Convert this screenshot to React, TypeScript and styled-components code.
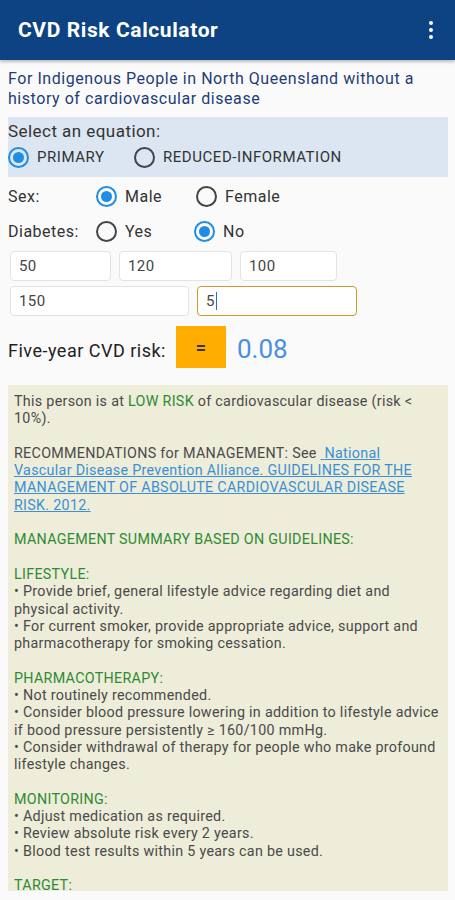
import React from "react";
import styled, { createGlobalStyle } from "styled-components";

const Global = createGlobalStyle`
  html, body { margin: 0; padding: 0; background: #fafafa; }
  body { font-family: Roboto, "Noto Sans", "Liberation Sans", sans-serif; }
  * { box-sizing: border-box; }
`;

const Page = styled.div`
  width: 455px;
  height: 900px;
  overflow: hidden;
  background: #fafafa;
`;

const AppBar = styled.header`
  height: 60px;
  background: #0d4383;
  display: flex;
  align-items: center;
  justify-content: space-between;
  padding: 0 18px 0 18px;
  box-shadow: 0 2px 3px rgba(0, 0, 0, 0.25);
  position: relative;
  z-index: 1;
`;

const Title = styled.h1`
  margin: 0;
  color: #fff;
  font-size: 21px;
  font-weight: 700;
  letter-spacing: 0.6px;
`;

const Kebab = styled.div`
  display: flex;
  flex-direction: column;
  gap: 3px;
  padding: 4px;
  span {
    width: 4px;
    height: 4px;
    border-radius: 50%;
    background: #fff;
  }
`;

const Content = styled.main`
  padding: 9px 7px 0 8px;
  display: flex;
  flex-direction: column;
`;

const Intro = styled.p`
  margin: 0;
  color: #1f3d78;
  font-size: 16px;
  line-height: 20px;
  letter-spacing: 0.55px;
`;

const EquationBox = styled.section`
  margin-top: 8px;
  background: #dbe6f2;
  padding: 3px 0 4px 0;
  height: 60px;
`;

const BoxLabel = styled.div`
  color: #333;
  font-size: 17px;
  line-height: 22px;
  letter-spacing: 0.45px;
`;

const RadioRow = styled.div<{ h: number }>`
  display: flex;
  align-items: center;
  height: ${(p) => p.h}px;
`;

const FieldLabel = styled.span<{ w: number }>`
  width: ${(p) => p.w}px;
  color: #333;
  font-size: 16px;
  letter-spacing: 0.5px;
`;

const RadioOption = styled.label<{ w?: number }>`
  display: flex;
  align-items: center;
  gap: 8px;
  width: ${(p) => (p.w ? `${p.w}px` : "auto")};
`;

const OptionText = styled.span<{ small?: boolean }>`
  font-size: ${(p) => (p.small ? 15 : 16)}px;
  letter-spacing: ${(p) => (p.small ? 0.55 : 0.5)}px;
  color: #333;
`;

const RadioCircle = styled.span<{ on?: boolean }>`
  width: 21px;
  height: 21px;
  border-radius: 50%;
  border: 2px solid ${(p) => (p.on ? "#1f8de3" : "#444")};
  display: flex;
  align-items: center;
  justify-content: center;
  flex-shrink: 0;
  &::after {
    content: "";
    width: 11px;
    height: 11px;
    border-radius: 50%;
    background: ${(p) => (p.on ? "#1f8de3" : "transparent")};
  }
`;

const InputRow = styled.div<{ mt: number }>`
  display: flex;
  gap: 8px;
  padding-left: 2px;
  margin-top: ${(p) => p.mt}px;
`;

const Field = styled.div<{ w: number; focused?: boolean }>`
  width: ${(p) => p.w}px;
  height: 30px;
  border: 1.5px solid ${(p) => (p.focused ? "#c99a2e" : "#e3e3e3")};
  border-radius: 4px;
  background: #fff;
  display: flex;
  align-items: center;
  padding-left: 8px;
  color: #444;
  font-size: 15px;
  letter-spacing: 0.4px;
`;

const Caret = styled.span`
  display: inline-block;
  width: 1.5px;
  height: 18px;
  background: #1f6fd0;
  margin-left: 1px;
`;

const RiskRow = styled.div`
  display: flex;
  align-items: center;
  margin-top: 10px;
  height: 42px;
`;

const RiskLabel = styled.span`
  font-size: 18px;
  letter-spacing: 0.5px;
  color: #222;
  width: 168px;
  padding-top: 6px;
`;

const EqualsButton = styled.button`
  width: 50px;
  height: 42px;
  border: none;
  background: #ffae00;
  color: #333;
  font-size: 18px;
  font-weight: 700;
  font-family: inherit;
  padding: 0;
`;

const RiskValue = styled.span`
  margin-left: 11px;
  color: #4a8ede;
  font-size: 26px;
  padding-top: 4px;
`;

const Results = styled.section`
  margin-top: 17px;
  background: #ededd9;
  padding: 8px 7px 0 6px;
  height: 506px;
  overflow: hidden;
  font-size: 14.3px;
  letter-spacing: 0.3px;
  line-height: 17.3px;
  color: #4a4a4a;
`;

const Para = styled.p`
  margin: 0 0 17.3px 0;
`;

const Green = styled.span`
  color: #2f8a33;
`;

const Heading = styled.div`
  color: #2f8a33;
`;

const Link = styled.a`
  color: #3b8fd6;
  text-decoration: underline;
`;

export default function App() {
  return (
    <Page>
      <Global />
      <AppBar>
        <Title>CVD Risk Calculator</Title>
        <Kebab>
          <span />
          <span />
          <span />
        </Kebab>
      </AppBar>
      <Content>
        <Intro>
          For Indigenous People in North Queensland without a history of cardiovascular disease
        </Intro>
        <EquationBox>
          <BoxLabel>Select an equation:</BoxLabel>
          <RadioRow h={30}>
            <RadioOption w={126}>
              <RadioCircle on />
              <OptionText small>PRIMARY</OptionText>
            </RadioOption>
            <RadioOption>
              <RadioCircle />
              <OptionText small>REDUCED-INFORMATION</OptionText>
            </RadioOption>
          </RadioRow>
        </EquationBox>
        <RadioRow h={38}>
          <FieldLabel w={88}>Sex:</FieldLabel>
          <RadioOption w={100}>
            <RadioCircle on />
            <OptionText>Male</OptionText>
          </RadioOption>
          <RadioOption>
            <RadioCircle />
            <OptionText>Female</OptionText>
          </RadioOption>
        </RadioRow>
        <RadioRow h={33}>
          <FieldLabel w={88}>Diabetes:</FieldLabel>
          <RadioOption w={98}>
            <RadioCircle />
            <OptionText>Yes</OptionText>
          </RadioOption>
          <RadioOption>
            <RadioCircle on />
            <OptionText>No</OptionText>
          </RadioOption>
        </RadioRow>
        <InputRow mt={3}>
          <Field w={101}>50</Field>
          <Field w={113}>120</Field>
          <Field w={97}>100</Field>
        </InputRow>
        <InputRow mt={5}>
          <Field w={179}>150</Field>
          <Field w={160} focused>
            5<Caret />
          </Field>
        </InputRow>
        <RiskRow>
          <RiskLabel>Five-year CVD risk:</RiskLabel>
          <EqualsButton>=</EqualsButton>
          <RiskValue>0.08</RiskValue>
        </RiskRow>
        <Results>
          <Para>
            This person is at <Green>LOW RISK</Green> of cardiovascular disease (risk &lt; 10%).
          </Para>
          <Para>
            RECOMMENDATIONS for MANAGEMENT: See{" "}
            <Link href="#">
              {"\u00a0"}National Vascular Disease Prevention Alliance. GUIDELINES FOR THE
              MANAGEMENT OF ABSOLUTE CARDIOVASCULAR DISEASE RISK. 2012.
            </Link>
          </Para>
          <Para>
            <Green>MANAGEMENT SUMMARY BASED ON GUIDELINES:</Green>
          </Para>
          <Para>
            <Heading>LIFESTYLE:</Heading>
            <div>• Provide brief, general lifestyle advice regarding diet and physical activity.</div>
            <div>
              • For current smoker, provide appropriate advice, support and pharmacotherapy for
              smoking cessation.
            </div>
          </Para>
          <Para>
            <Heading>PHARMACOTHERAPY:</Heading>
            <div>• Not routinely recommended.</div>
            <div>
              • Consider blood pressure lowering in addition to lifestyle advice if bood pressure
              persistently ≥ 160/100 mmHg.
            </div>
            <div>• Consider withdrawal of therapy for people who make profound lifestyle changes.</div>
          </Para>
          <Para>
            <Heading>MONITORING:</Heading>
            <div>• Adjust medication as required.</div>
            <div>• Review absolute risk every 2 years.</div>
            <div>• Blood test results within 5 years can be used.</div>
          </Para>
          <Para>
            <Heading>TARGET:</Heading>
          </Para>
        </Results>
      </Content>
    </Page>
  );
}
